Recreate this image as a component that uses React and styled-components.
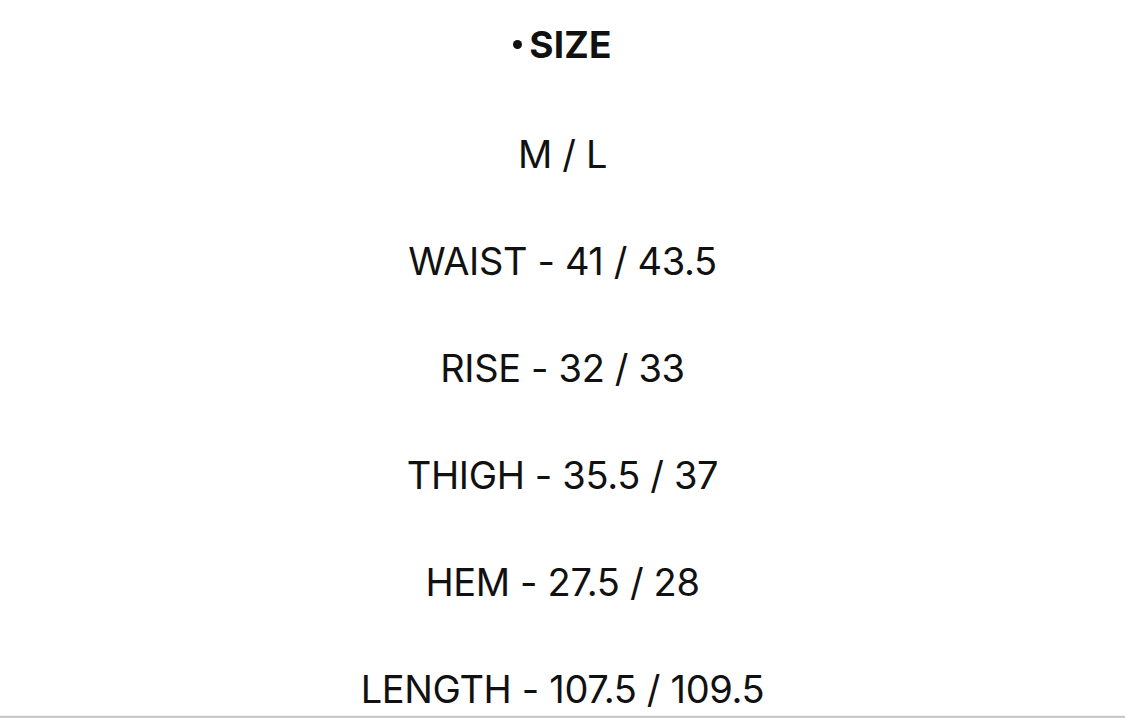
import React from "react";
import styled, { createGlobalStyle } from "styled-components";

const GlobalStyle = createGlobalStyle`
  html, body {
    margin: 0;
    padding: 0;
    background: #ffffff;
  }
  body {
    font-family: Inter, "Noto Sans", "Liberation Sans", sans-serif;
    color: #111111;
  }
`;

const Page = styled.div`
  height: 716px;
  border-bottom: 2px solid #c9c9c9;
  box-shadow: 0 -1px 0 #f0f0f0 inset;
  overflow: hidden;
  display: flex;
  flex-direction: column;
  align-items: center;
`;

const Title = styled.div`
  flex-shrink: 0;
  height: 88px;
  margin-bottom: 13px;
  display: flex;
  align-items: center;
  gap: 7px;
  font-size: 37px;
  font-weight: 700;
  letter-spacing: 0.2px;
`;

const Bullet = styled.span`
  width: 9px;
  height: 9px;
  border-radius: 50%;
  background: #111111;
  margin-top: 1px;
`;

const Line = styled.div`
  flex-shrink: 0;
  height: 107px;
  line-height: 107px;
  font-size: 38px;
  font-weight: 400;
  letter-spacing: -0.35px;
  white-space: nowrap;
`;

const rows = [
  "M / L",
  "WAIST - 41 / 43.5",
  "RISE - 32 / 33",
  "THIGH - 35.5 / 37",
  "HEM - 27.5 / 28",
  "LENGTH - 107.5 / 109.5",
];

const App = () => {
  return (
    <>
      <GlobalStyle />
      <Page>
        <Title>
          <Bullet />
          SIZE
        </Title>
        {rows.map((row, index) => (
          <Line key={`row-${index}`}>{row}</Line>
        ))}
      </Page>
    </>
  );
};

export default App;
